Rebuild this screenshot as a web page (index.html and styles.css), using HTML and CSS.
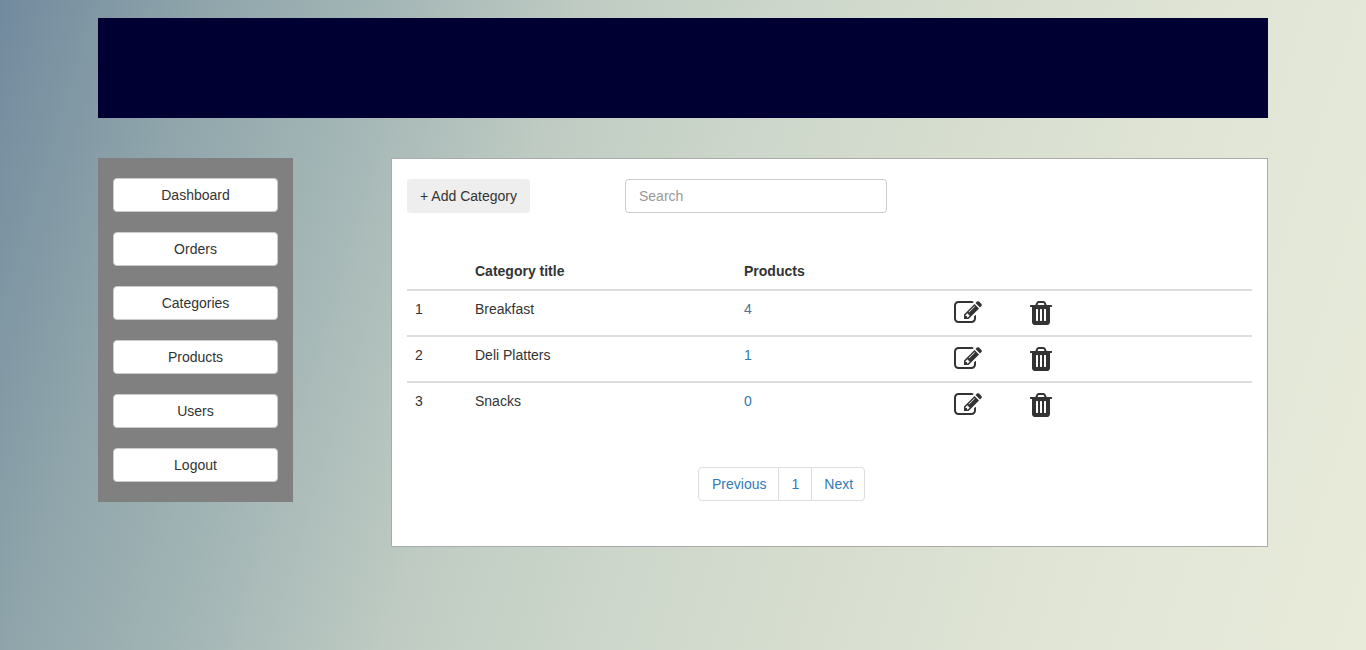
FILE: index.html
```html
<!DOCTYPE html>
<html lang="en">

<head>
     <meta charset="UTF-8">
     <meta name="viewport" content="width=device-width, initial-scale=1.0">
     <title>Categories</title>
     <link rel="stylesheet" href="styles.css">
</head>

<body>
     <svg class="icon-defs">
          <symbol id="edit" viewBox="0 0 1792 1792"><path d="M888 1184l116-116-152-152-116 116v56h96v96h56zm440-720q-16-16-33 1l-350 350q-17 17-1 33t33-1l350-350q17-17 1-33zm80 594v190q0 119-84.5 203.5t-203.5 84.5h-832q-119 0-203.5-84.5t-84.5-203.5v-832q0-119 84.5-203.5t203.5-84.5h832q63 0 117 25 15 7 18 23 3 17-9 29l-49 49q-14 14-32 8-23-6-45-6h-832q-66 0-113 47t-47 113v832q0 66 47 113t113 47h832q66 0 113-47t47-113v-126q0-13 9-22l64-64q15-15 35-7t20 29zm-96-738l288 288-672 672h-288v-288zm444 132l-92 92-288-288 92-92q28-28 68-28t68 28l152 152q28 28 28 68t-28 68z"/></symbol>
          <symbol id="trash" viewBox="192 0 1408 1792"><path d="M704 1376v-704q0-14-9-23t-23-9h-64q-14 0-23 9t-9 23v704q0 14 9 23t23 9h64q14 0 23-9t9-23zm256 0v-704q0-14-9-23t-23-9h-64q-14 0-23 9t-9 23v704q0 14 9 23t23 9h64q14 0 23-9t9-23zm256 0v-704q0-14-9-23t-23-9h-64q-14 0-23 9t-9 23v704q0 14 9 23t23 9h64q14 0 23-9t9-23zm-544-992h448l-48-117q-7-9-17-11h-317q-10 2-17 11zm928 32v64q0 14-9 23t-23 9h-96v948q0 83-47 143.5t-113 60.5h-832q-66 0-113-58.5t-47-141.5v-952h-96q-14 0-23-9t-9-23v-64q0-14 9-23t23-9h309l70-167q15-37 54-63t79-26h320q40 0 79 26t54 63l70 167h309q14 0 23 9t9 23z"/></symbol>
     </svg>

     <div class="container">
          <div class="banner"></div>

          <div class="content">
               <div class="sidebar">
                    <a class="side-btn" href="#">Dashboard</a>
                    <a class="side-btn" href="#">Orders</a>
                    <a class="side-btn" href="#">Categories</a>
                    <a class="side-btn" href="#">Products</a>
                    <a class="side-btn" href="#">Users</a>
                    <a class="side-btn" href="#">Logout</a>
               </div>

               <div class="panel">
                    <div class="toolbar">
                         <button class="add-btn">+ Add Category</button>
                         <input class="search" type="text" placeholder="Search">
                    </div>

                    <table>
                         <thead>
                              <tr>
                                   <th class="col-num"></th>
                                   <th class="col-title">Category title</th>
                                   <th class="col-products">Products</th>
                                   <th class="col-edit"></th>
                                   <th></th>
                              </tr>
                         </thead>
                         <tbody>
                              <tr>
                                   <td>1</td>
                                   <td>Breakfast</td>
                                   <td><a class="count count-visited" href="#">4</a></td>
                                   <td><svg class="icon-edit"><use href="#edit"></use></svg></td>
                                   <td><svg class="icon-trash"><use href="#trash"></use></svg></td>
                              </tr>
                              <tr>
                                   <td>2</td>
                                   <td>Deli Platters</td>
                                   <td><a class="count" href="#">1</a></td>
                                   <td><svg class="icon-edit"><use href="#edit"></use></svg></td>
                                   <td><svg class="icon-trash"><use href="#trash"></use></svg></td>
                              </tr>
                              <tr>
                                   <td>3</td>
                                   <td>Snacks</td>
                                   <td><a class="count" href="#">0</a></td>
                                   <td><svg class="icon-edit"><use href="#edit"></use></svg></td>
                                   <td><svg class="icon-trash"><use href="#trash"></use></svg></td>
                              </tr>
                         </tbody>
                    </table>

                    <div class="pager">
                         <a href="#">Previous</a>
                         <a href="#">1</a>
                         <a href="#">Next</a>
                    </div>
               </div>
          </div>
     </div>
</body>

</html>
```

FILE: styles.css
```css
* {
     box-sizing: border-box;
}

body {
     margin: 0;
     height: 650px;
     overflow: hidden;
     font-family: "Liberation Sans", Arial, sans-serif;
     font-size: 14px;
     line-height: 20px;
     color: #333;
     background: linear-gradient(107deg, #728a9e 0%, #8fa5ab 13%, #a6b8b7 26%, #c0ccc3 38%, #ccd6ca 50%, #dbe1d2 70%, #e3e7d7 85%, #e8ebda 100%);
}

.icon-defs {
     display: none;
}

.container {
     width: 1170px;
     margin: 0 auto;
     padding-top: 18px;
}

.banner {
     height: 100px;
     background: #003;
}

.content {
     display: flex;
     align-items: flex-start;
     margin-top: 40px;
}

/* left menu */

.sidebar {
     display: flex;
     flex-direction: column;
     gap: 20px;
     width: 195px;
     padding: 20px 15px;
     background: #808080;
}

.side-btn {
     display: block;
     height: 34px;
     padding: 6px 12px;
     text-align: center;
     color: #333;
     text-decoration: none;
     background: #fff;
     border: 1px solid #ccc;
     border-radius: 4px;
}

/* main panel */

.panel {
     width: 877px;
     height: 389px;
     margin-left: 98px;
     padding: 20px 15px;
     background: #fff;
     border: 1px solid #aaa;
}

.toolbar {
     display: flex;
     align-items: flex-start;
}

.add-btn {
     width: 123px;
     height: 34px;
     padding: 0;
     font-family: inherit;
     font-size: 14px;
     color: #333;
     background: #eee;
     border: 0;
     border-radius: 4px;
}

.search {
     width: 262px;
     height: 34px;
     margin-left: 95px;
     padding: 6px 13px;
     font-family: inherit;
     font-size: 14px;
     color: #555;
     background: #fff;
     border: 1px solid #ccc;
     border-radius: 4px;
}

.search::placeholder {
     color: #999;
}

table {
     width: 100%;
     margin-top: 36px;
     border-collapse: collapse;
     table-layout: fixed;
}

th {
     height: 41px;
     padding: 8px;
     text-align: left;
     vertical-align: bottom;
     border-bottom: 2px solid #ddd;
}

td {
     height: 46px;
     padding: 8px;
     vertical-align: top;
     border-top: 2px solid #ddd;
}

tbody tr:first-child td {
     border-top: 0;
}

.col-num {
     width: 60px;
}

.col-title {
     width: 269px;
}

.col-products {
     width: 210px;
}

.col-edit {
     width: 76px;
}

.count {
     color: #337ab7;
     text-decoration: none;
}

.count-visited {
     color: #556f8f;
}

.icon-edit {
     display: block;
     width: 28px;
     height: 28px;
     fill: #333;
}

.icon-trash {
     display: block;
     width: 22px;
     height: 28px;
     fill: #333;
}

/* pagination */

.pager {
     display: flex;
     margin-top: 39px;
     margin-left: 291px;
}

.pager a {
     height: 34px;
     padding: 6px 12px;
     color: #337ab7;
     text-decoration: none;
     background: #fff;
     border: 1px solid #ddd;
     margin-left: -1px;
}

.pager a:first-child {
     margin-left: 0;
     padding-left: 13px;
     border-radius: 4px 0 0 4px;
}

.pager a:last-child {
     padding-right: 11px;
     border-radius: 0 4px 4px 0;
}
```
